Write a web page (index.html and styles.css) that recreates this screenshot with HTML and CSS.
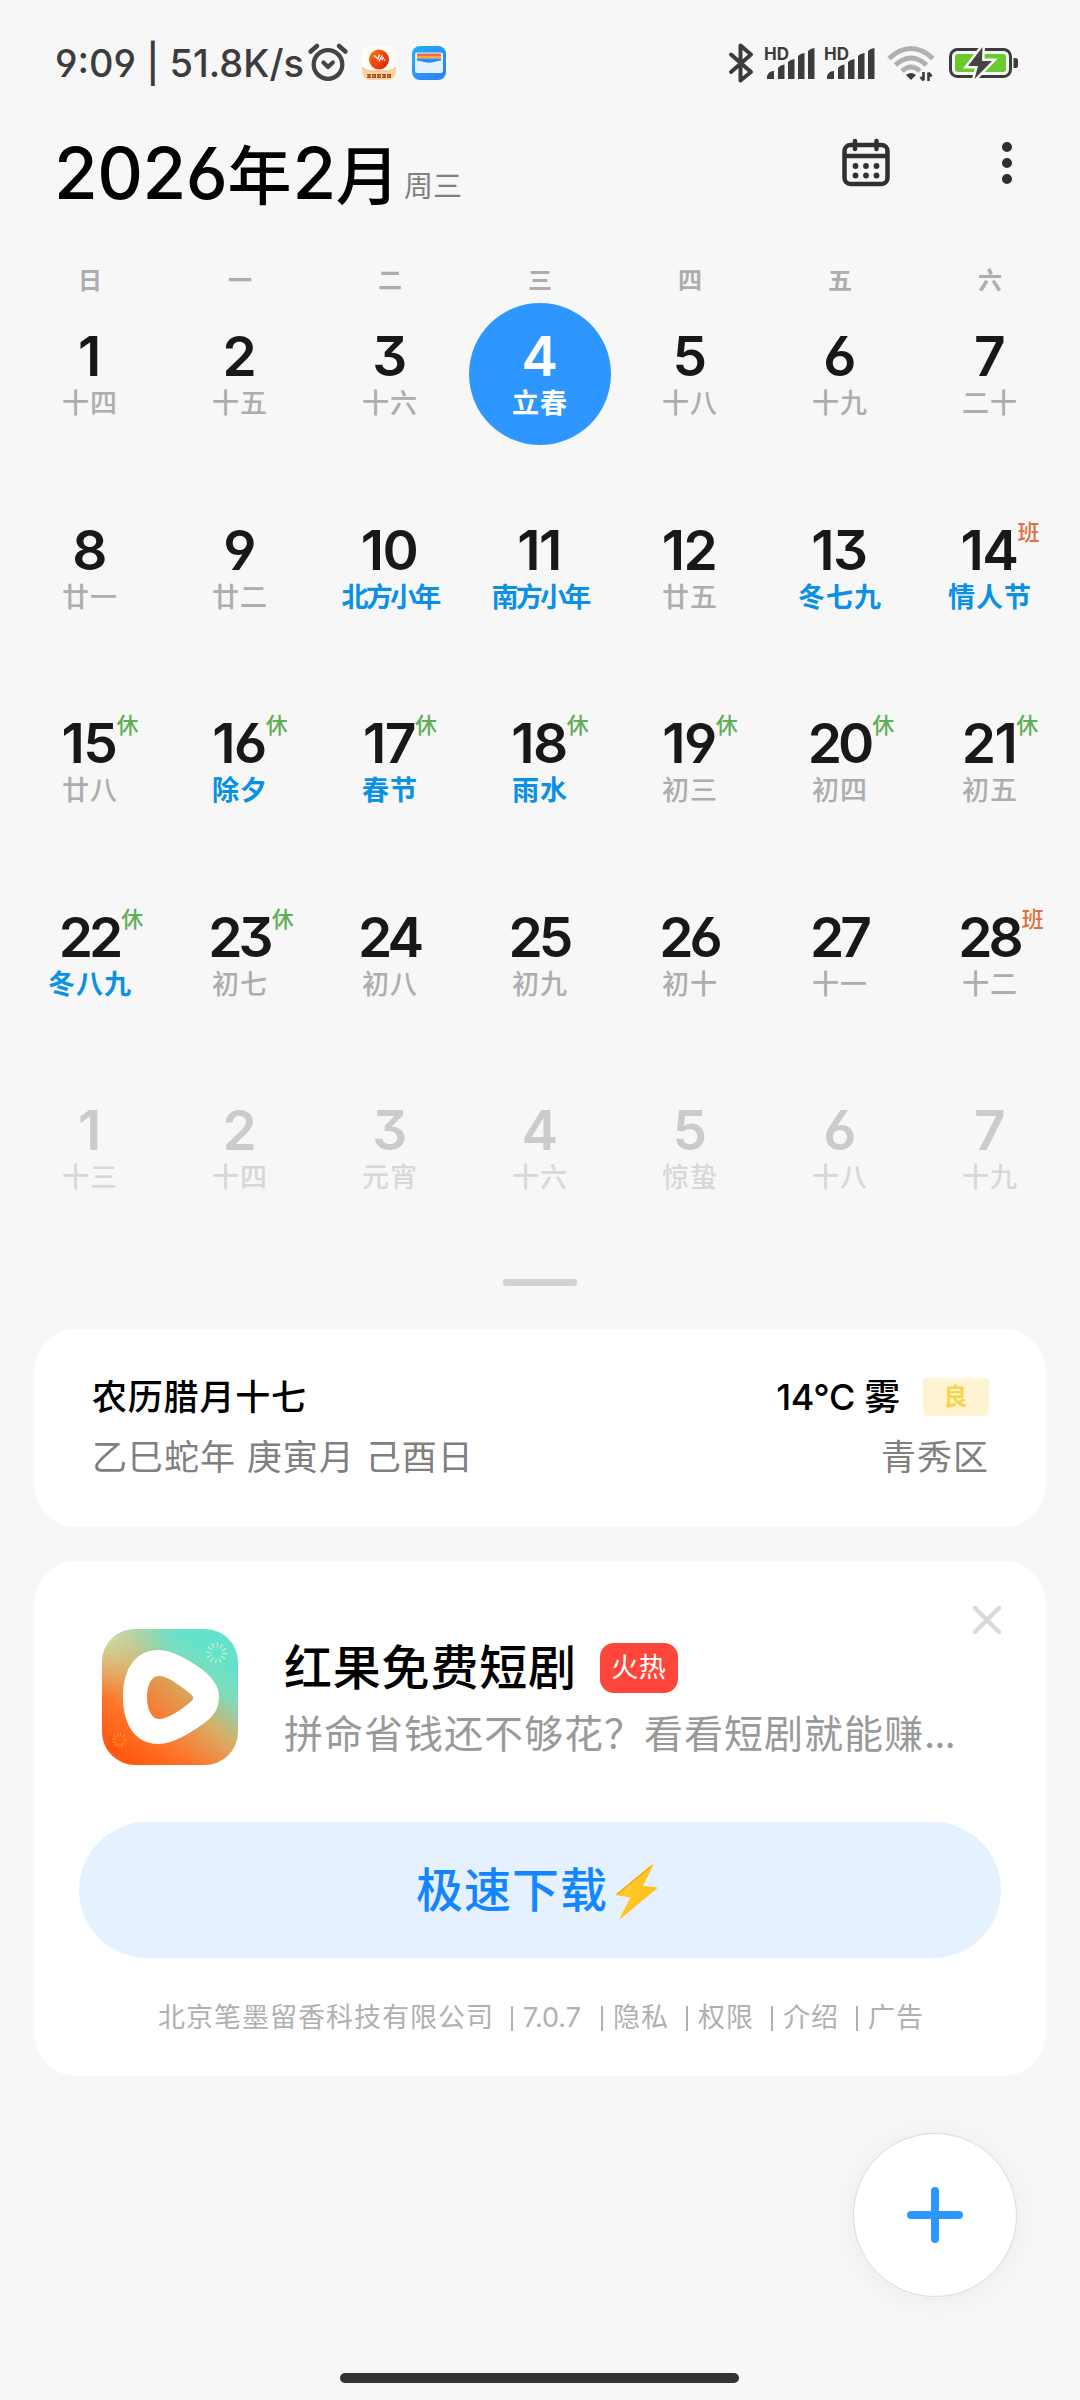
FILE: index.html
```html
<!DOCTYPE html>
<html lang="zh-CN">
<head>
<meta charset="utf-8">
<title>日历</title>
<link rel="stylesheet" href="styles.css">
</head>
<body>
<div class="screen">
  <header class="status">
    <span class="clock">9:09 | 51.8K/s</span>
    <svg class="alarm" width="42" height="40" viewBox="0 0 42 40" fill="none" stroke="#444" stroke-linecap="round">
      <circle cx="21" cy="22.500" r="14.300" stroke-width="4.300"/>
      <path d="M3.600 9.500 10 4M38.400 9.500 32 4" stroke-width="4.500"/>
      <path d="M16.500 20.500 21 25l4.800-4.500" stroke-width="4.200" stroke-linejoin="round"/>
    </svg>
    <svg class="app-a" width="34" height="34" viewBox="0 0 34 34">
      <defs><clipPath id="ca"><rect width="34" height="34" rx="8"/></clipPath>
      <linearGradient id="ga" x1="0" y1="0" x2="1" y2="1"><stop offset="0" stop-color="#ff7a10"/><stop offset="1" stop-color="#e01505"/></linearGradient></defs>
      <g clip-path="url(#ca)">
        <rect width="34" height="34" fill="#fffdf8"/>
        <path d="M0 21q4 4 8 4h18q4 0 8-4v13H0z" fill="#f8d6a4"/>
        <path d="M0 21q4 4 8 4h18q4 0 8-4" fill="none" stroke="#f2b666"/>
        <circle cx="17" cy="13.500" r="10" fill="url(#ga)"/>
        <path d="M12 9.500l3 2.500M15.500 13.500l2-5M17 15.500l3-6M20 14l1.500-3M22 13.500l1.500 1" stroke="#fff" stroke-width="1.500" fill="none"/>
        <path d="M5 30h24" stroke="#a8481c" stroke-width="4" stroke-dasharray="4 1"/>
        <path d="M5 30h24" stroke="#f8d6a4" stroke-width="1" stroke-dasharray="1.500 1.500"/>
      </g>
    </svg>
    <svg class="app-b" width="34" height="34" viewBox="0 0 34 34">
      <defs><linearGradient id="gb" x1="0" y1="0" x2="1" y2="1"><stop offset="0" stop-color="#1fb2fb"/><stop offset="1" stop-color="#2f7cf6"/></linearGradient></defs>
      <rect width="34" height="34" rx="8" fill="url(#gb)"/>
      <rect x="3" y="6.500" width="28" height="20.500" rx="2" fill="#e6f1ff"/>
      <rect x="5" y="7.500" width="24" height="2.500" fill="#f4694c"/>
      <rect x="5" y="10" width="24" height="2.500" fill="#fba928"/>
      <path d="M5 12.500h24v2q-5 .5-7 1.500-5 1.500-10 0-2-1-7-1.500z" fill="#2b8af8"/>
    </svg>
    <svg class="status-right" width="300" height="44" viewBox="724 40 300 44">
      <path d="M731 54.500 751 72 740.500 80.500V45.500L751 54.500 731 72" fill="none" stroke="#3c3c3c" stroke-width="4" stroke-linejoin="round" stroke-linecap="round"/>
      <g fill="#3c3c3c">
        <g id="sig">
          <text class="hd" x="764" y="59.500">HD</text>
          <path d="M767 79v-3q2-5 7-5v8zM778 79V68q2-3 6.500-3.500V79zM788 79V62q2-2.500 6.500-3V79zM798 79V56q2-2.500 6.500-3V79zM808 79V51q2-2.500 6.500-3V79z"/>
        </g>
        <use href="#sig" x="60"/>
      </g>
      <g fill="none" stroke="#b0b0b0" stroke-width="5">
        <path d="M889 58.500q22-20 44 0M895.500 65q15.500-14 31 0M902 71q9-8 18 0"/>
      </g>
      <path d="M906 75q5-4 10 0l-5 5z" fill="#3c3c3c"/>
      <path d="M923.500 72v8.500M920.500 77l3 3.500M928.500 81v-8.500M931.500 76.500l-3-4" stroke="#3c3c3c" stroke-width="2.600" fill="none"/>
      <rect x="950.500" y="49.500" width="60" height="27" rx="7" fill="none" stroke="#3c3c3c" stroke-width="3"/>
      <rect x="955" y="54" width="51" height="18" rx="3" fill="#69cb2b"/>
      <path d="M1013.500 58h1.500q3 0 3 2v6q0 2-3 2h-1.500z" fill="#3c3c3c"/>
      <path d="M982.500 47 968 66H978L974.500 79 992 61H982z" fill="#444" stroke="#f7f7f7" stroke-width="5" paint-order="stroke"/>
    </svg>
  </header>

  <section class="titlebar">
    <h1 class="month">2026<span>年</span>2<span>月</span></h1>
    <span class="week">周三</span>
    <svg class="cal-icon" width="50" height="50" viewBox="842 138 50 50">
      <rect x="845.500" y="145" width="43" height="39" rx="6" fill="none" stroke="#303030" stroke-width="4.500"/>
      <path d="M846 156h42" stroke="#303030" stroke-width="4.500"/>
      <path d="M856 141v8M877.500 141v8" stroke="#303030" stroke-width="4.500" stroke-linecap="round"/>
      <g fill="#303030"><circle cx="856.500" cy="166" r="2.900"/><circle cx="867" cy="166" r="2.900"/><circle cx="877.500" cy="166" r="2.900"/><circle cx="856.500" cy="175.500" r="2.900"/><circle cx="867" cy="175.500" r="2.900"/><circle cx="877.500" cy="175.500" r="2.900"/></g>
    </svg>
    <svg class="more" width="12" height="44" viewBox="0 0 12 44" fill="#303030"><circle cx="6" cy="6" r="5"/><circle cx="6" cy="22" r="5"/><circle cx="6" cy="38" r="5"/></svg>
  </section>

  <div class="weekdays"><span>日</span><span>一</span><span>二</span><span>三</span><span>四</span><span>五</span><span>六</span></div>

  <main class="grid">
    <div class="day"><b>1</b><i>十四</i></div>
    <div class="day"><b>2</b><i>十五</i></div>
    <div class="day"><b>3</b><i>十六</i></div>
    <div class="day today"><b>4</b><i>立春</i></div>
    <div class="day"><b>5</b><i>十八</i></div>
    <div class="day"><b>6</b><i>十九</i></div>
    <div class="day"><b>7</b><i>二十</i></div>
    <div class="day"><b>8</b><i>廿一</i></div>
    <div class="day"><b>9</b><i>廿二</i></div>
    <div class="day fest"><b>10</b><i class="long">北方小年</i></div>
    <div class="day fest"><b>11</b><i class="long">南方小年</i></div>
    <div class="day"><b>12</b><i>廿五</i></div>
    <div class="day fest"><b>13</b><i>冬七九</i></div>
    <div class="day fest"><b>14<em class="work">班</em></b><i>情人节</i></div>
    <div class="day"><b>15<em>休</em></b><i>廿八</i></div>
    <div class="day fest"><b>16<em>休</em></b><i>除夕</i></div>
    <div class="day fest"><b>17<em>休</em></b><i>春节</i></div>
    <div class="day fest"><b>18<em>休</em></b><i>雨水</i></div>
    <div class="day"><b>19<em>休</em></b><i>初三</i></div>
    <div class="day"><b class="wide">20<em>休</em></b><i>初四</i></div>
    <div class="day"><b>21<em>休</em></b><i>初五</i></div>
    <div class="day fest"><b class="wide">22<em>休</em></b><i>冬八九</i></div>
    <div class="day"><b class="wide">23<em>休</em></b><i>初七</i></div>
    <div class="day"><b class="wide">24</b><i>初八</i></div>
    <div class="day"><b class="wide">25</b><i>初九</i></div>
    <div class="day"><b class="wide">26</b><i>初十</i></div>
    <div class="day"><b class="wide">27</b><i>十一</i></div>
    <div class="day"><b class="wide">28<em class="work">班</em></b><i>十二</i></div>
    <div class="day next"><b>1</b><i>十三</i></div>
    <div class="day next"><b>2</b><i>十四</i></div>
    <div class="day next"><b>3</b><i>元宵</i></div>
    <div class="day next"><b>4</b><i>十六</i></div>
    <div class="day next"><b>5</b><i>惊蛰</i></div>
    <div class="day next"><b>6</b><i>十八</i></div>
    <div class="day next"><b>7</b><i>十九</i></div>
  </main>
  <div class="handle"></div>

  <section class="card lunar">
    <div class="row"><span class="strong">农历腊月十七</span><span class="weather"><span class="temp">14°C 雾</span><span class="aqi">良</span></span></div>
    <div class="row sub"><span>乙巳蛇年 庚寅月 己酉日</span><span>青秀区</span></div>
  </section>

  <section class="card ad">
    <svg class="close" width="30" height="30" viewBox="0 0 30 30"><path d="M3 3l24 24M27 3 3 27" stroke="#d9d9d9" stroke-width="4.500" stroke-linecap="round"/></svg>
    <div class="ad-head">
      <svg class="logo" width="136" height="136" viewBox="0 0 136 136">
        <defs>
          <clipPath id="cl"><rect width="136" height="136" rx="33"/></clipPath>
          <linearGradient id="g1" x1="0.200" y1="0.950" x2="0.800" y2="0.150"><stop offset="0" stop-color="#ff5a12"/><stop offset=".25" stop-color="#ff752b"/><stop offset=".55" stop-color="#d7ae68"/><stop offset=".8" stop-color="#7edcba"/><stop offset="1" stop-color="#64e2cc"/></linearGradient>
          <radialGradient id="g2" cx="0" cy="0" r=".5"><stop offset="0" stop-color="#c8e6b8"/><stop offset="1" stop-color="#e8c080" stop-opacity="0"/></radialGradient>
          <linearGradient id="g3" x1="0" y1="1" x2="1" y2="0"><stop offset="0" stop-color="#ff7228"/><stop offset="1" stop-color="#ccb56c"/></linearGradient>
        </defs>
        <g clip-path="url(#cl)"><rect width="136" height="136" fill="url(#g1)"/><rect width="136" height="136" fill="url(#g2)"/></g>
        <path d="M57 21C30 21 21 45 21 68s9 47 36 47c13 0 30-10 44-20 10-7 16-15 16-27s-8-20-16-27C87 31 70 21 57 21z" fill="#fff"/>
        <path d="M57 47c-9 0-12 12-12 22s4 21 12 21c8 0 19-7 29-15 7-5 7-7 0-12C76 55 65 47 57 47z" fill="url(#g3)"/>
        <circle cx="114.500" cy="24" r="8" fill="none" stroke="#cdf3c6" stroke-width="5" stroke-dasharray="1.100 3.088"/>
        <circle cx="17.500" cy="111" r="5.500" fill="none" stroke="#ff9a20" stroke-width="3.500" stroke-dasharray="1 1.880"/>
      </svg>
      <div class="ad-text">
        <div class="ad-title"><span>红果免费短剧</span><span class="hot">火热</span></div>
        <div class="ad-sub">拼命省钱还不够花？看看短剧就能赚<span class="dots">...</span></div>
      </div>
    </div>
    <div class="download"><span>极速下载</span><svg width="44" height="56" viewBox="0 0 44 56"><defs><linearGradient id="gz" x1="0" y1="0" x2="1" y2="1"><stop offset="0" stop-color="#ffd23c"/><stop offset="1" stop-color="#ffb90c"/></linearGradient></defs><path d="M37.500 1 27 22.500 41.500 24 5.500 54 16.500 33 1.500 30.500z" fill="url(#gz)" stroke="#ffc524" stroke-width="1.500" stroke-linejoin="round"/><path d="M36 2.500 2.500 30" stroke="#f0a818" stroke-width="1.300"/></svg></div>
    <div class="legal"><span class="co">北京笔墨留香科技有限公司</span><span class="ver">7.0.7</span><span>隐私</span><span>权限</span><span>介绍</span><span>广告</span></div>
  </section>

  <div class="fab"><svg width="58" height="58" viewBox="0 0 58 58"><path d="M29 5v48M5 29h48" stroke="#2d97ff" stroke-width="8" stroke-linecap="round"/></svg></div>
  <div class="homebar"></div>
</div>
</body>
</html>
```
FILE: styles.css
```css
* { box-sizing: border-box; }
body { margin: 0; background: #f7f7f7; }
.screen {
  position: relative;
  width: 1080px;
  height: 2400px;
  overflow: hidden;
  background: #f7f7f7;
  font-family: "Inter", "Noto Sans CJK SC", sans-serif;
  font-feature-settings: "cv03", "cv04", "cv09";
  color: #000;
}
.status { display: flex; height: 84px; padding: 40px 56px 0 55px; align-items: flex-start; }
.clock { width: 252px; font-size: 38px; font-weight: 450; line-height: 46px; white-space: pre; color: #3c3c3c; letter-spacing: 0; }
.alarm { margin-top: 2px; }
.app-a { margin: 6px 0 0 13px; }
.app-b { margin: 6px 0 0 16px; }
.status-right { margin-left: auto; }
.hd { font: 700 17px "Inter", sans-serif; }

.titlebar { display: flex; height: 162px; padding-left: 54px; align-items: flex-start; }
.month { margin: 37px 0 0; width: 350px; font-size: 71px; font-weight: 500; line-height: 104px; white-space: nowrap; letter-spacing: -0.500px; }
.month span { font-size: 64px; letter-spacing: 1px; }
.week { width: 437px; padding-top: 81px; font-size: 29px; line-height: 44px; color: #808080; }
.cal-icon { margin-top: 54px; }
.more { margin: 57px 0 0 110px; }

.weekdays { display: grid; grid-template-columns: repeat(7, 150px); height: 64px; padding: 17px 15px 0; font-size: 24px; line-height: 36px; text-align: center; color: #adadad; font-weight: 700; }
.grid { display: grid; grid-template-columns: repeat(7, 150px); grid-auto-rows: 193.500px; height: 969px; padding: 0 15px; }
.day { display: flex; flex-direction: column; align-items: center; padding-top: 12px; }
.day b { position: relative; margin-left: -2px; font-size: 55px; font-weight: 600; line-height: 68px; letter-spacing: -1.500px; color: #181818; }
.day b.wide { letter-spacing: -4px; }
.day i { margin-top: -6px; font-style: normal; font-size: 27px; line-height: 40px; letter-spacing: 1px; color: #adadad; white-space: nowrap; font-weight: 500; }
.day em { position: absolute; left: 100%; top: 2px; margin-left: 0; font-style: normal; font-size: 22px; line-height: 28px; font-weight: 500; color: #5fae55; letter-spacing: 0; }
.day .wide em { margin-left: 2px; }
.day em.work { color: #e06f3f; }
.day.fest i { color: #0a90e4; font-weight: 700; }
.day i.long { letter-spacing: -2.800px; }
.day.today { width: 142px; height: 142px; margin: -7px 4px 0; padding-top: 19px; border-radius: 50%; background: #2d97ff; }
.day.today b { color: #fff; }
.day.today i { color: #fff; font-weight: 700; }
.day.next b { color: #cbcbcb; }
.day.next i { color: #d8d8d8; }
.handle { width: 74px; height: 7px; margin: 0 auto 43px; border-radius: 3px; background: #d2d2d2; }

.card { margin: 0 34px; border-radius: 43px; background: #fff; }
.lunar { height: 198px; padding: 42px 57px 0 58px; }
.row { display: flex; justify-content: space-between; height: 60px; line-height: 53px; font-size: 35px; letter-spacing: .8px; }
.strong { font-weight: 500; }
.weather { display: flex; }
.temp { margin-right: 23px; font-size: 36px; letter-spacing: -.3px; font-weight: 500; }
.aqi { width: 66px; height: 38px; margin-top: 7px; border-radius: 4px; background: #fff4d2; color: #f9d448; font-size: 24px; line-height: 38px; font-weight: 700; text-align: center; }
.sub { color: #808080; letter-spacing: 1px; }

.ad { position: relative; height: 515px; margin-top: 34px; padding: 68px 45px 0; }
.close { position: absolute; right: 44px; top: 44px; }
.ad-head { display: flex; padding-left: 23px; }
.ad-text { padding: 4px 0 0 46px; }
.ad-title { display: flex; height: 70px; font-size: 48px; line-height: 70px; font-weight: 500; letter-spacing: .8px; }
.hot { width: 78px; height: 50px; margin: 10px 0 0 23px; border-radius: 14px; background: #ff463a; color: #fff; font-size: 27px; line-height: 50px; font-weight: 400; text-align: center; letter-spacing: .5px; }
.ad-sub { height: 58px; margin-top: 2px; font-size: 39px; line-height: 58px; color: #999; white-space: nowrap; letter-spacing: 1px; }
.dots { letter-spacing: -1px; }
.download { display: flex; height: 136px; margin-top: 57px; border-radius: 68px; align-items: center; justify-content: center; background: #e5f1ff; color: #1285ff; font-size: 47px; font-weight: 500; letter-spacing: 1px; }
.download span { margin: -8px 0 0 -5px; }
.download svg { margin: 4px 0 0 7px; }
.legal { display: flex; margin-top: 38px; padding-left: 79px; font-size: 27px; line-height: 44px; letter-spacing: 1px; color: #b0b0b0; white-space: nowrap; }
.legal span { display: flex; width: 85px; align-items: center; }
.legal span + span::before { content: ""; width: 2px; height: 25px; margin-right: 10px; background: #b0b0b0; }
.legal .co { width: 353px; }
.legal .ver { width: 90px; letter-spacing: 0; }

.fab { position: absolute; left: 853px; top: 2133px; display: grid; width: 164px; height: 164px; place-items: center; border: 1px solid #dcdcdc; border-radius: 50%; background: #fff; box-shadow: 0 3px 30px rgba(0, 0, 0, .05); }
.homebar { position: absolute; left: 340px; top: 2373px; width: 399px; height: 10px; border-radius: 5px; background: #323232; }
```
